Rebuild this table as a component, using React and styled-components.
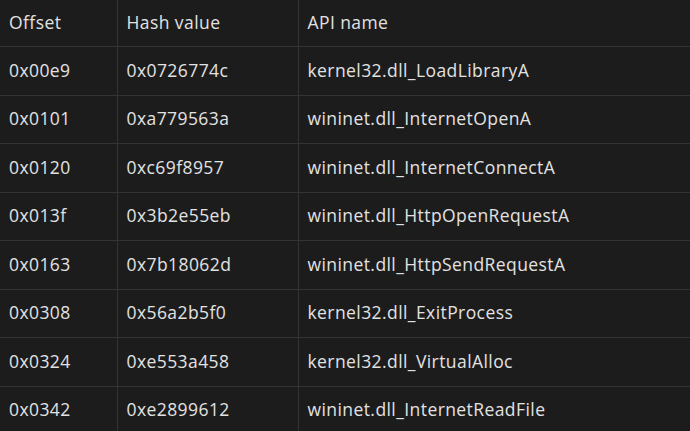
import React from "react";
import styled, { createGlobalStyle } from "styled-components";

const Global = createGlobalStyle`
  html, body { margin: 0; padding: 0; background: #1c1c1c; }
  body { font-family: "Open Sans", "Noto Sans", sans-serif; }
`;

const Table = styled.table`
  border-collapse: collapse;
  width: 690px;
  table-layout: fixed;
  color: #e2e2e2;
  font-size: 17.5px;
  letter-spacing: 0.42px;
`;

const Col = styled.col`
  width: ${(p) => p.$w}px;
`;

const Th = styled.th`
  text-align: left;
  font-weight: 400;
  height: 44px;
  padding: 0 0 2px 9px;
  border-bottom: 1px solid #333333;
  border-left: 1px solid #333333;
  &:first-child { border-left: none; }
`;

const Td = styled.td`
  height: 45.5px;
  padding: 0 0 2px 9px;
  border-bottom: 1px solid #333333;
  border-left: 1px solid #333333;
  white-space: nowrap;
  &:first-child { border-left: none; }
`;

const rows = [
  ["0x00e9", "0x0726774c", "kernel32.dll_LoadLibraryA"],
  ["0x0101", "0xa779563a", "wininet.dll_InternetOpenA"],
  ["0x0120", "0xc69f8957", "wininet.dll_InternetConnectA"],
  ["0x013f", "0x3b2e55eb", "wininet.dll_HttpOpenRequestA"],
  ["0x0163", "0x7b18062d", "wininet.dll_HttpSendRequestA"],
  ["0x0308", "0x56a2b5f0", "kernel32.dll_ExitProcess"],
  ["0x0324", "0xe553a458", "kernel32.dll_VirtualAlloc"],
  ["0x0342", "0xe2899612", "wininet.dll_InternetReadFile"],
];

export default function App() {
  return (
    <>
      <Global />
      <Table>
        <colgroup>
          <Col $w={117} />
          <Col $w={181} />
          <Col $w={392} />
        </colgroup>
        <thead>
          <tr>
            <Th>Offset</Th>
            <Th>Hash value</Th>
            <Th>API name</Th>
          </tr>
        </thead>
        <tbody>
          {rows.map((r) => (
            <tr key={r[0]}>
              {r.map((c, i) => (
                <Td key={i}>{c}</Td>
              ))}
            </tr>
          ))}
        </tbody>
      </Table>
    </>
  );
}
